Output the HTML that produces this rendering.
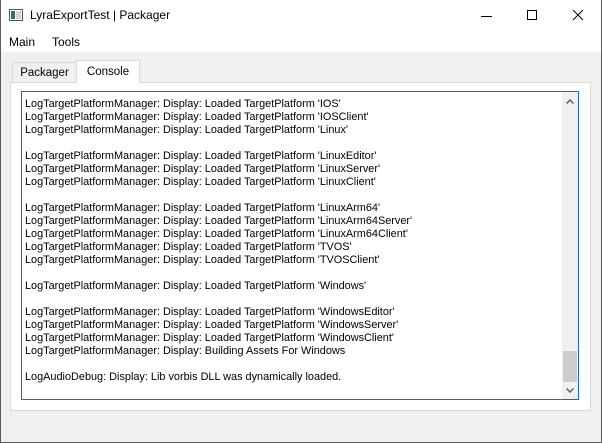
<!DOCTYPE html>
<html><head><meta charset="utf-8"><style>
*{margin:0;padding:0;box-sizing:border-box}
body{width:602px;height:443px;overflow:hidden;background:#f0f0f0;font-family:"Liberation Sans",sans-serif;position:relative}
.win{position:absolute;left:0;top:0;width:602px;height:443px;border:1px solid #5a5a5a;border-top:none}
.title{position:absolute;left:0;top:0;width:602px;height:31px;background:#fff}
.title .t{position:absolute;left:30px;top:8px;font-size:12px;color:#000}
.menu{position:absolute;left:0;top:31px;width:602px;height:21px;background:#fff;font-size:12px}
.menu span{position:absolute;top:4px}
.tab{position:absolute;font-size:11.5px;text-align:center;border:1px solid #d9d9d9;border-bottom:none}
.pane{position:absolute;left:10px;top:82px;width:581px;height:329px;background:#fff;border:1px solid #d9d9d9}
.edit{position:absolute;left:21px;top:91px;width:558px;height:309px;border:1px solid #1c6ea4;background:#fff;overflow:hidden}
.txt{position:absolute;left:3px;top:6px;font-size:10.9px;line-height:13px;color:#000;white-space:pre}
.sb{position:absolute;right:0;top:0;width:16px;height:307px;background:#f0f0f0}
.thumb{position:absolute;left:1px;top:259px;width:14px;height:31px;background:#cdcdcd}
</style></head><body>
<div class="title">
<svg style="position:absolute;left:9px;top:9px" width="14" height="12"><rect x="0.5" y="0.5" width="13" height="11" fill="#fff" stroke="#555"/><rect x="2" y="2" width="4" height="8" fill="#3d6f63"/><rect x="7" y="2" width="5" height="8" fill="#cfd8d8"/></svg>
<div class="t">LyraExportTest | Packager</div>
<svg style="position:absolute;left:480px;top:10px" width="110" height="12"><line x1="1" y1="6.5" x2="12" y2="6.5" stroke="#000"/><rect x="47.5" y="0.5" width="9" height="9" fill="none" stroke="#000"/><path d="M93 0L103 10M103 0L93 10" stroke="#000"/></svg>
</div>
<div class="menu"><span style="left:9px">Main</span><span style="left:52px">Tools</span></div>
<div class="tab" style="left:12px;top:62px;width:65px;height:21px;background:#f0f0f0;padding-top:4px">Packager</div>
<div class="pane"></div>
<div class="tab" style="left:76px;top:60px;width:64px;height:23px;background:#fff;padding-top:5px">Console</div>
<div class="edit">
<div class="txt">LogTargetPlatformManager: Display: Loaded TargetPlatform 'IOS'
LogTargetPlatformManager: Display: Loaded TargetPlatform 'IOSClient'
LogTargetPlatformManager: Display: Loaded TargetPlatform 'Linux'

LogTargetPlatformManager: Display: Loaded TargetPlatform 'LinuxEditor'
LogTargetPlatformManager: Display: Loaded TargetPlatform 'LinuxServer'
LogTargetPlatformManager: Display: Loaded TargetPlatform 'LinuxClient'

LogTargetPlatformManager: Display: Loaded TargetPlatform 'LinuxArm64'
LogTargetPlatformManager: Display: Loaded TargetPlatform 'LinuxArm64Server'
LogTargetPlatformManager: Display: Loaded TargetPlatform 'LinuxArm64Client'
LogTargetPlatformManager: Display: Loaded TargetPlatform 'TVOS'
LogTargetPlatformManager: Display: Loaded TargetPlatform 'TVOSClient'

LogTargetPlatformManager: Display: Loaded TargetPlatform 'Windows'

LogTargetPlatformManager: Display: Loaded TargetPlatform 'WindowsEditor'
LogTargetPlatformManager: Display: Loaded TargetPlatform 'WindowsServer'
LogTargetPlatformManager: Display: Loaded TargetPlatform 'WindowsClient'
LogTargetPlatformManager: Display: Building Assets For Windows

LogAudioDebug: Display: Lib vorbis DLL was dynamically loaded.</div>
<div class="sb"><div class="thumb"></div>
<svg style="position:absolute;left:4px;top:7px" width="8" height="5"><path d="M0.5 4.5L4 1L7.5 4.5" stroke="#606060" stroke-width="1.5" fill="none"/></svg>
<svg style="position:absolute;left:4px;top:296px" width="8" height="5"><path d="M0.5 0.5L4 4L7.5 0.5" stroke="#606060" stroke-width="1.5" fill="none"/></svg>
</div>
</div>
<div class="win"></div>
</body></html>
